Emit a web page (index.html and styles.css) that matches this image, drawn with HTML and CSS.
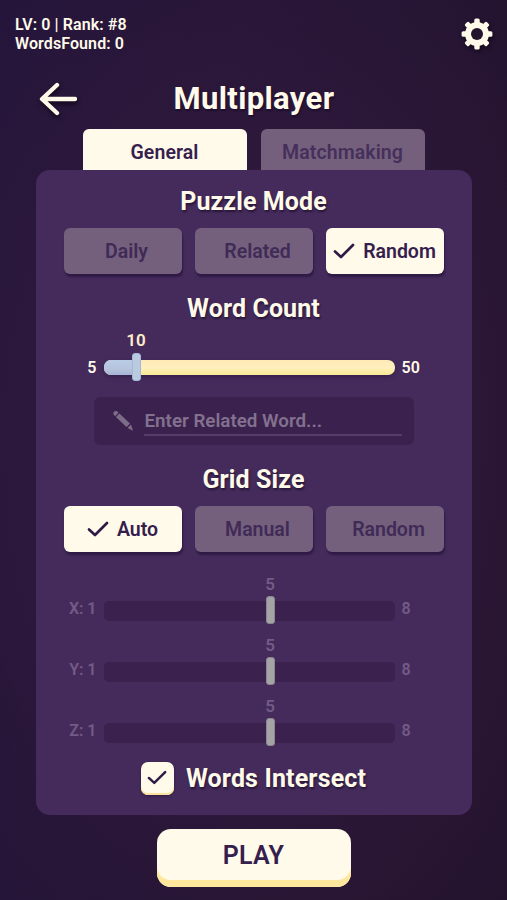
FILE: index.html
```
<!DOCTYPE html>
<html lang="en">
<head>
<meta charset="utf-8">
<title>Multiplayer</title>
<link rel="stylesheet" href="styles.css">
</head>
<body>
	<div id="container">
		<div class="status">
			<div class="stats">
				<div>LV: 0 | Rank: #8</div>
				<div>WordsFound: 0</div>
			</div>
			<svg class="gear" viewBox="-16 -16 32 32">
				<g fill="#fffaea">
					<rect id="tooth" x="-2.7" y="-15.4" width="5.4" height="30.8" rx="1.5"/>
					<use href="#tooth" transform="rotate(45)"/>
					<use href="#tooth" transform="rotate(90)"/>
					<use href="#tooth" transform="rotate(135)"/>
				</g>
				<circle r="9" fill="none" stroke="#fffaea" stroke-width="6"/>
				<circle r="6" fill="#24132c"/>
			</svg>
		</div>
		<div class="title-bar">
			<svg class="back" viewBox="0 0 38 34">
				<path d="M18 3 L3 17 L18 31 M4 17 H36"/>
			</svg>
			<h1>Multiplayer</h1>
		</div>
		<div class="tabs">
			<button class="tab on">General</button>
			<button class="tab">Matchmaking</button>
		</div>

		<div class="panel">
			<h2>Puzzle Mode</h2>
			<div class="options">
				<button class="opt"><span>Daily</span></button>
				<button class="opt"><span>Related</span></button>
				<button class="opt on"><svg class="check" viewBox="0 0 22 16"><path d="M2 8.5 L8 14 L20 2"/></svg><span>Random</span></button>
			</div>

			<h2 class="next">Word Count</h2>
			<div class="slider">
				<div class="min">5</div>
				<div class="track">
					<div class="fill"></div>
					<div class="thumb" style="left: 33px;"><b>10</b></div>
				</div>
				<div class="max">50</div>
			</div>

			<div class="field">
				<svg class="pencil" viewBox="0 0 20 20">
					<path d="M1 4 A2.3 2.3 0 0 1 4.5 0.8 L5.5 1.8 L2 5.2 Z M2.9 6.1 L6.4 2.6 L17 12.5 L13.5 16 Z M14.5 17 L18 13.5 L20 19.7 Z"/>
				</svg>
				<div class="placeholder">Enter Related Word...</div>
			</div>

			<h2 class="next">Grid Size</h2>
			<div class="options">
				<button class="opt on"><svg class="check" viewBox="0 0 22 16"><path d="M2 8.5 L8 14 L20 2"/></svg><span>Auto</span></button>
				<button class="opt"><span>Manual</span></button>
				<button class="opt"><span>Random</span></button>
			</div>

			<div class="axes">
				<div class="slider off">
					<div class="min">X: 1</div>
					<div class="track"><div class="thumb" style="left: 167px;"><b>5</b></div></div>
					<div class="max">8</div>
				</div>
				<div class="slider off">
					<div class="min">Y: 1</div>
					<div class="track"><div class="thumb" style="left: 167px;"><b>5</b></div></div>
					<div class="max">8</div>
				</div>
				<div class="slider off">
					<div class="min">Z: 1</div>
					<div class="track"><div class="thumb" style="left: 167px;"><b>5</b></div></div>
					<div class="max">8</div>
				</div>
			</div>

			<div class="intersect">
				<div class="box"><svg viewBox="0 0 22 16"><path d="M2 8.5 L8 14 L20 2"/></svg></div>
				<span>Words Intersect</span>
			</div>
		</div>

		<button class="play">PLAY</button>
	</div>
</body>
</html>
```
FILE: styles.css
```
* {
	box-sizing: border-box;
}

body {
	margin: 0;
	font-family: Roboto, "Liberation Sans", sans-serif;
	color: #fffaea;
}

#container {
	display: flex;
	flex-direction: column;
	align-items: center;
	width: 507px;
	height: 900px;
	overflow: hidden;
	background: radial-gradient(ellipse 85% 75% at 50% 50%, rgba(56, 29, 66, 0.9), rgba(36, 19, 48, 0) 100%), linear-gradient(100deg, #23143a, #21122a);
}

button {
	border: 0;
	padding: 0;
	font-family: inherit;
	font-weight: 600;
	color: #35204d;
}

h1, h2 {
	margin: 0;
	text-align: center;
	font-weight: 700;
	white-space: nowrap;
	text-shadow: 1px 2px 2px rgba(20, 8, 35, 0.6);
}

.status {
	display: flex;
	justify-content: space-between;
	width: 100%;
	height: 76px;
	padding: 15px 14px 0 15px;
}

.stats {
	font-size: 16px;
	line-height: 19px;
	font-weight: 600;
	letter-spacing: 0.1px;
	white-space: nowrap;
}

.gear {
	width: 32px;
	height: 32px;
	margin-top: 3px;
	filter: drop-shadow(1px 2px 2px #120719);
}

.title-bar {
	display: grid;
	grid-template-columns: 38px 1fr 38px;
	align-items: center;
	width: 100%;
	height: 46px;
	padding: 0 38px 0 39px;
}

.back {
	width: 38px;
	height: 34px;
	fill: none;
	stroke: #fffaea;
	stroke-width: 4.3;
	stroke-linecap: round;
	stroke-linejoin: round;
	filter: drop-shadow(1px 3px 2px #120719);
}

h1 {
	font-size: 31px;
	line-height: 46px;
	letter-spacing: 0.35px;
}

.tabs {
	display: flex;
	gap: 14px;
	height: 41px;
	margin-top: 7px;
}

.tab {
	width: 164px;
	height: 41px;
	padding-top: 5px;
	border-radius: 6px 6px 0 0;
	background: #74607d;
	color: #45305b;
	font-size: 19.5px;
	letter-spacing: 0.1px;
}

.tab.on, .opt.on {
	background: #fffaea;
	color: #35204d;
}

.panel {
	width: 436px;
	height: 645px;
	padding: 16px 28px 0;
	border-radius: 14px;
	background: #452b5b;
}

h2 {
	height: 30px;
	font-size: 25px;
	line-height: 32px;
	letter-spacing: 0.1px;
}

.options {
	display: flex;
	gap: 13px;
	margin-top: 12px;
}

.opt {
	display: flex;
	align-items: center;
	justify-content: center;
	width: 118px;
	height: 46px;
	border-radius: 6px;
	background: #74607d;
	color: #402b57;
	font-size: 19.5px;
	box-shadow: 1px 3px 2px #2f1a45;
}

.opt span {
	padding-left: 8px;
}

.check {
	width: 22px;
	height: 16px;
}

.check path, .box path {
	fill: none;
	stroke: #2e1a45;
	stroke-width: 2.7;
	stroke-linecap: round;
	stroke-linejoin: round;
}

.next {
	margin-top: 19px;
}

.slider {
	display: grid;
	grid-template-columns: 40px 291px 49px;
	align-items: center;
	height: 28px;
	margin-top: 30px;
	font-size: 16px;
	font-weight: 600;
}

.min {
	padding: 1px 7px 0 0;
	text-align: right;
	white-space: nowrap;
}

.max {
	padding: 1px 0 0 7px;
}

.track {
	position: relative;
	height: 15px;
	border-radius: 7px;
	background: linear-gradient(#ffeab5, #ffefbd 50%, #f8e994);
	box-shadow: 0 2px 4px #36204b;
}

.fill {
	width: 36px;
	height: 15px;
	border-radius: 7px 0 0 7px;
	background: linear-gradient(#b9cce6, #b7c4dd 60%, #a4b3d3);
}

.thumb {
	position: absolute;
	top: 50%;
	width: 9px;
	height: 28px;
	margin: -14px 0 0 -5px;
	border-radius: 3px;
	background: #bacbe1;
	border: 1px solid #a5b7d6;
}

.thumb b {
	position: absolute;
	left: 50%;
	bottom: 30px;
	transform: translateX(-50%);
	font-size: 17px;
	line-height: 19px;
	font-weight: 600;
	color: #ffeccb;
}

.field {
	display: flex;
	align-items: center;
	width: 320px;
	height: 48px;
	margin: 16px 0 0 30px;
	padding: 0 12px 0 19px;
	border-radius: 6px;
	background: #3a214e;
}

.pencil {
	width: 20px;
	height: 20px;
	fill: #7d6c86;
}

.placeholder {
	width: 258px;
	height: 29px;
	margin-left: 11px;
	padding-left: 1px;
	border-bottom: 2px solid #543d69;
	font-size: 18.8px;
	line-height: 29px;
	font-weight: 600;
	white-space: nowrap;
	color: #83718f;
}

.axes {
	margin-top: 44px;
}

.axes .slider {
	margin: 0 0 33px;
}

.off .min, .off .max {
	padding-bottom: 4px;
	color: #735b86;
}

.off .track {
	top: 1px;
	height: 20px;
	border-radius: 5px;
	background: #3a214e;
	box-shadow: none;
}

.off .thumb {
	margin-top: -15px;
	background: #a4a3a5;
	border: 1px solid #8b858f;
}

.off .thumb b {
	bottom: 29px;
	color: #735b86;
}

.intersect {
	display: flex;
	align-items: center;
	justify-content: center;
	height: 34px;
	margin-top: -18px;
	font-size: 25px;
	font-weight: 700;
	letter-spacing: 0.15px;
	white-space: nowrap;
	text-shadow: 1px 2px 2px rgba(20, 8, 35, 0.6);
}

.box {
	display: flex;
	justify-content: center;
	padding-top: 8px;
	width: 33px;
	height: 33px;
	margin-right: 12px;
	border-radius: 7px;
	background: #fffaea;
	box-shadow: inset 0 -2px #fae29a, 0 1px 3px #2f1a45;
}

.box svg {
	width: 20px;
	height: 15px;
}

.play {
	width: 194px;
	height: 58px;
	margin-top: 14px;
	padding-bottom: 6px;
	border-radius: 14px;
	background: #fffaea;
	box-shadow: inset 0 -7px #ffe89e;
	font-size: 25px;
	letter-spacing: 0.3px;
}
```
